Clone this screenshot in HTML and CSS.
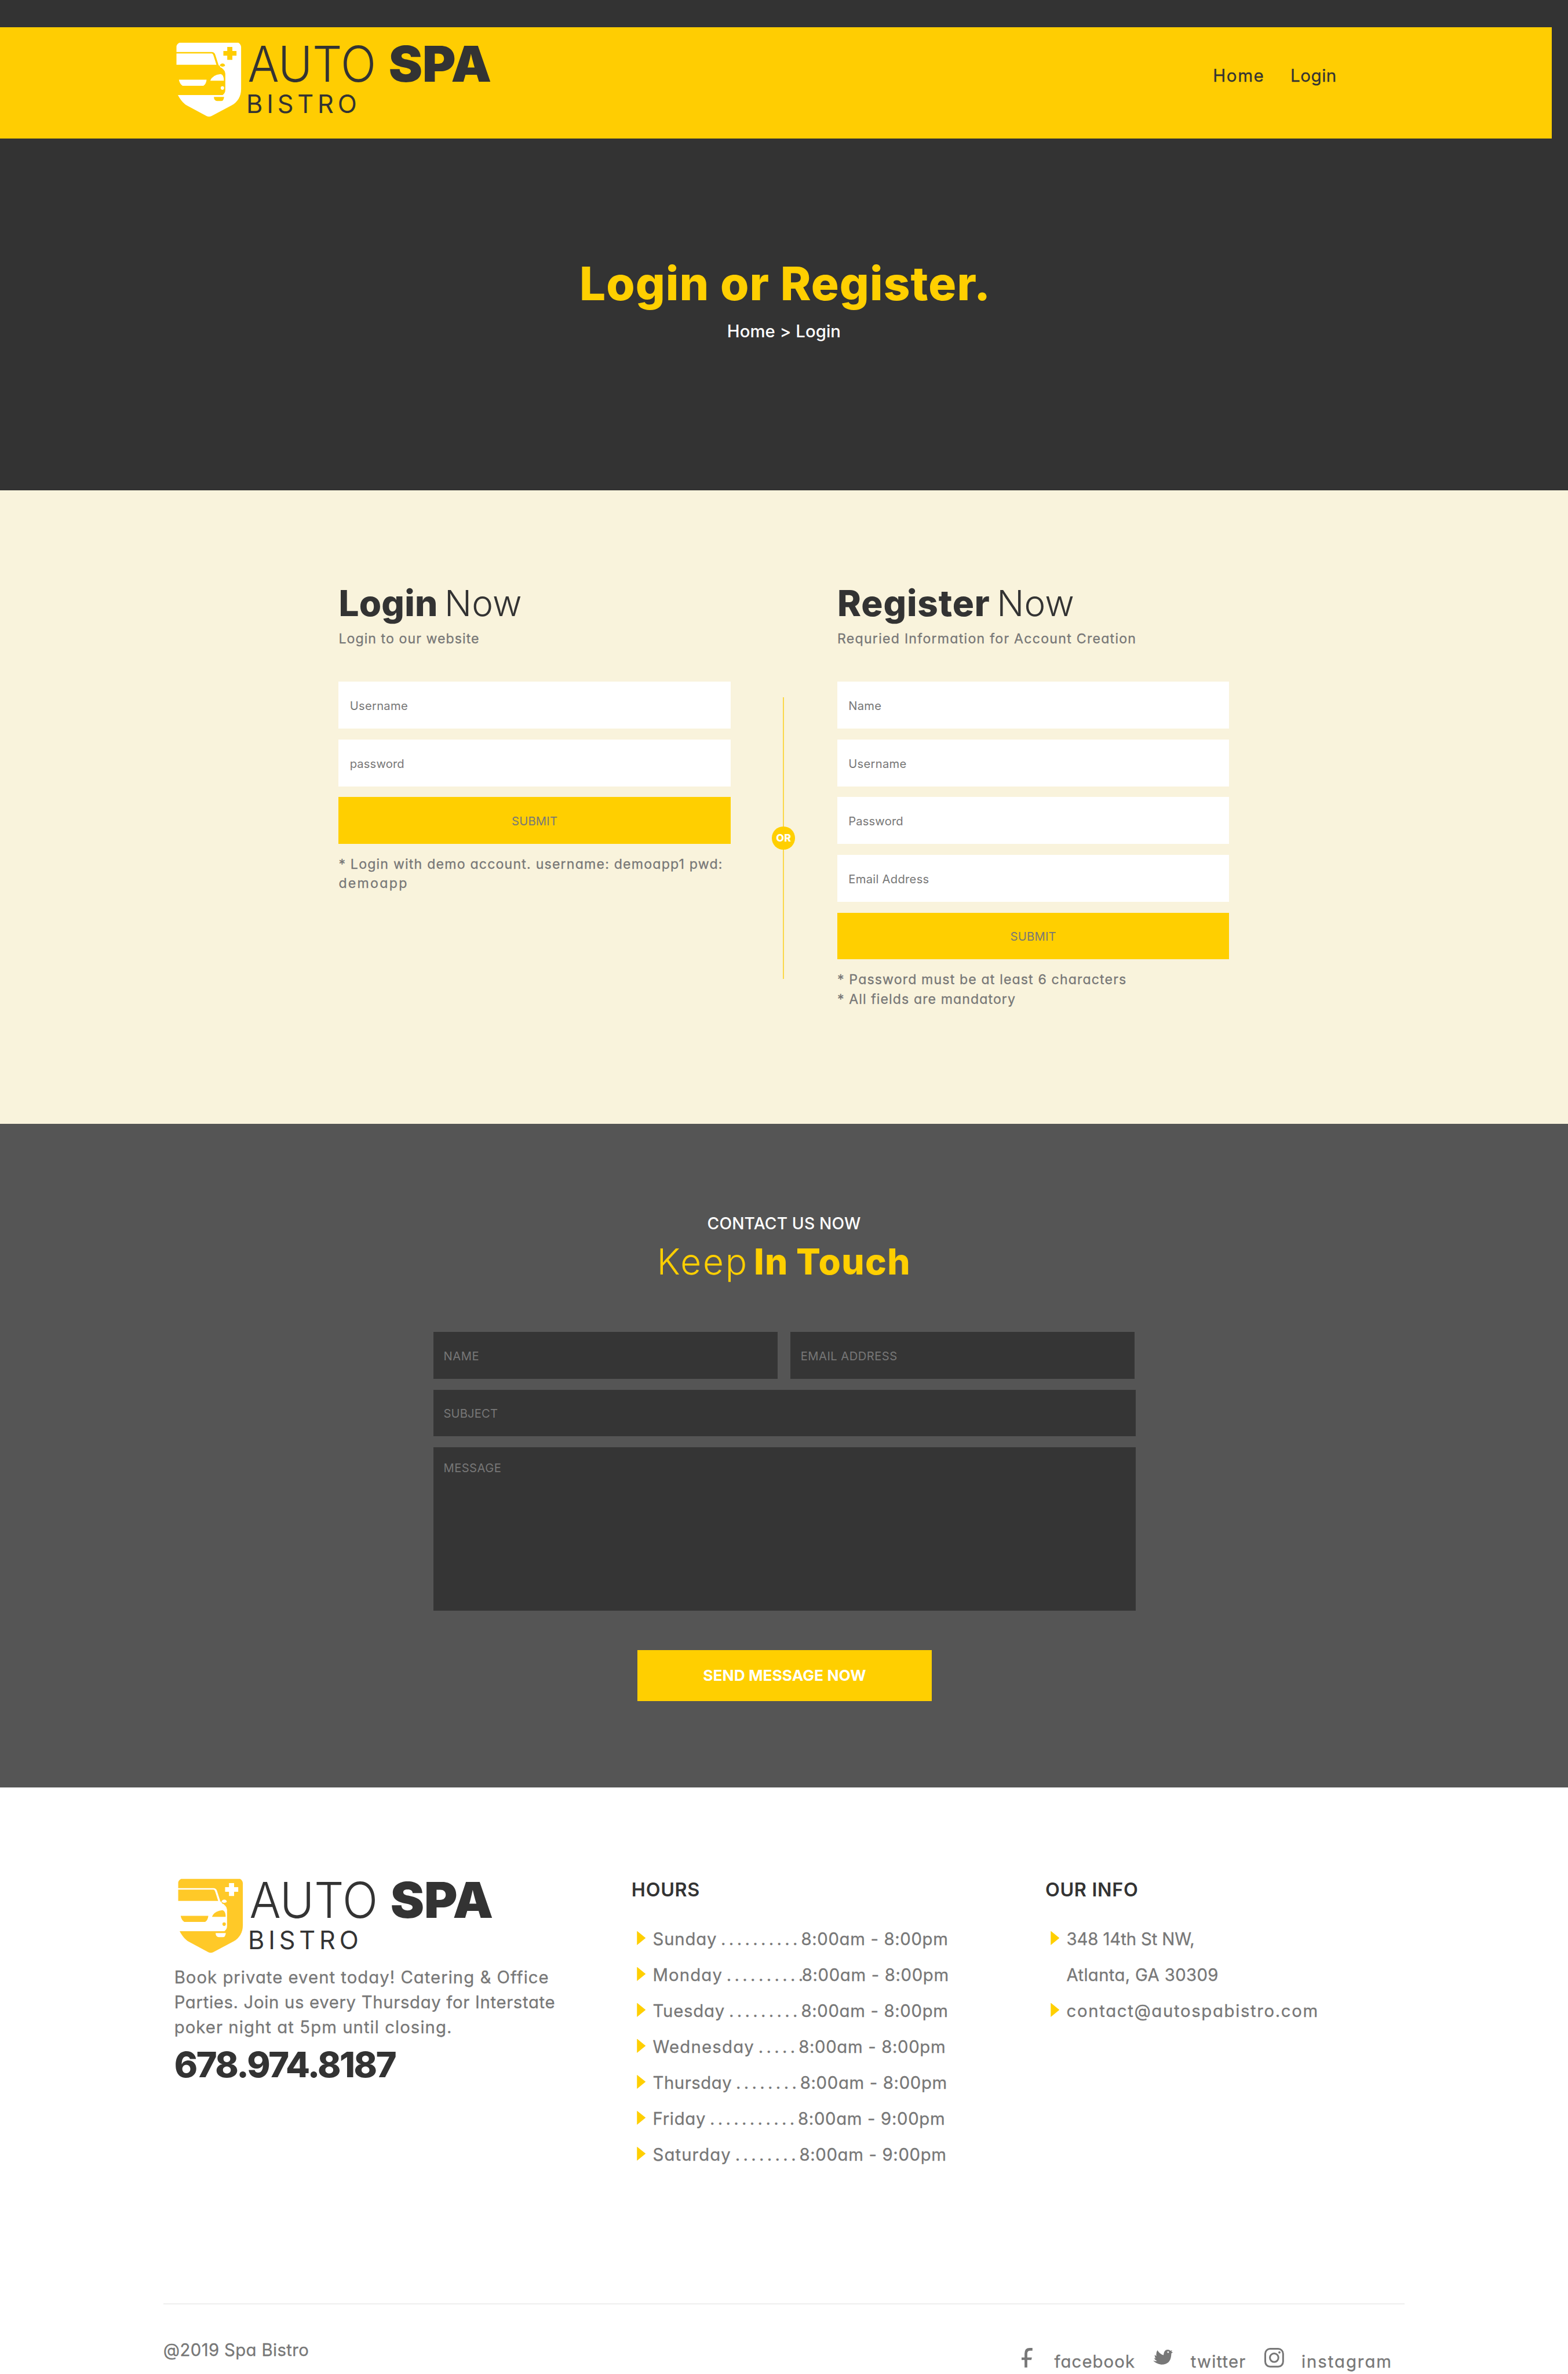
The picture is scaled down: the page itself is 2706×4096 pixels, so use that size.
FILE: index.html
```html
<!DOCTYPE html>
<html lang="en">
<head>
<meta charset="utf-8">
<title>Auto Spa Bistro - Login</title>
<link rel="stylesheet" href="styles.css">
</head>
<body>
<svg class="defs" aria-hidden="true">
  <symbol id="emblem" viewBox="0 0 590 150">
    <g transform="translate(-40 -70) scale(.44643 .33333)">
      <path class="shield" d="M98 255Q99 243 110 235H353Q363 244 364 258V490C364 530 350 560 325 580L242 639Q232 645 222 639L140 580C125 567 112 545 104 523L98 500Z"/>
      <path class="gap-line" d="M96 290H243Q251 290 254 303L268 362"/>
      <path class="gap" d="M92 356H268L275 362Q285 375 292 383Q299 392 299 405V495Q299 512 288 523H92ZM276 360Q280 348 289 349Q298 352 298 361Q294 369 283 366ZM252 533H294Q292 556 282 556H264Q252 552 252 533ZM307 258H328V280H345V306H328V329H307V306H291V280H307Z"/>
      <path class="shield" d="M237 444Q245 412 280 407Q294 412 293 444ZM108 438H222Q220 462 209 472H123Q111 460 108 438ZM281 374L276 364L284 368Z"/>
      <ellipse class="shield" cx="287" cy="484" rx="7" ry="10"/>
    </g>
  </symbol>
</svg>

<header class="header">
  <svg class="logo" viewBox="0 0 590 150">
    <use href="#emblem"/>
    <text class="logo-thin" x="134.5" y="80.3" textLength="236" lengthAdjust="spacingAndGlyphs">AUTO</text>
    <text class="logo-heavy" x="393.5" y="80.3" textLength="189" lengthAdjust="spacingAndGlyphs">SPA</text>
    <text class="logo-sub" x="132" y="137" textLength="203">BISTRO</text>
  </svg>
  <nav class="nav"><a class="ls-home">Home</a><a class="ls-login">Login</a></nav>
</header>

<section class="hero">
  <h1>Login or Register.</h1>
  <p>Home &gt; Login</p>
</section>

<section class="auth">
  <div class="auth-col">
    <h2><b class="ls-t1">Login</b> <span class="ls-t2">Now</span></h2>
    <p class="sub ls-s1">Login to our website</p>
    <form>
      <input class="ls-in" placeholder="Username">
      <input class="ls-in2" placeholder="password">
      <button type="button">SUBMIT</button>
    </form>
    <p class="note"><span class="ls-n1">* Login with demo account. username: demoapp1 pwd:</span><br><span class="ls-n2">demoapp</span></p>
  </div>
  <div class="divider"><span class="or">OR</span></div>
  <div class="auth-col">
    <h2><b class="ls-t3">Register</b> <span class="ls-t2">Now</span></h2>
    <p class="sub ls-s2">Requried Information for Account Creation</p>
    <form>
      <input class="ls-in" placeholder="Name">
      <input class="ls-in" placeholder="Username">
      <input class="ls-in2" placeholder="Password">
      <input class="ls-in" placeholder="Email Address">
      <button type="button">SUBMIT</button>
    </form>
    <p class="note"><span class="ls-n3">* Password must be at least 6 characters</span><br><span class="ls-n4">* All fields are mandatory</span></p>
  </div>
</section>

<section class="contact">
  <p class="kicker">CONTACT US NOW</p>
  <h2><span class="ls-k1">Keep</span> <b class="ls-k2">In Touch</b></h2>
  <form>
    <div class="pair"><input class="ls-c1" placeholder="NAME"><input class="ls-c2" placeholder="EMAIL ADDRESS"></div>
    <input class="ls-c3" placeholder="SUBJECT">
    <textarea class="ls-c2" placeholder="MESSAGE"></textarea>
    <button type="button">SEND MESSAGE NOW</button>
  </form>
</section>

<footer class="footer">
  <div class="cols">
    <div class="about">
      <svg class="logo" viewBox="0 0 590 150">
        <use href="#emblem"/>
        <text class="logo-thin" x="134.5" y="80.3" textLength="236" lengthAdjust="spacingAndGlyphs">AUTO</text>
        <text class="logo-heavy" x="393.5" y="80.3" textLength="189" lengthAdjust="spacingAndGlyphs">SPA</text>
        <text class="logo-sub" x="132" y="137" textLength="203">BISTRO</text>
      </svg>
      <p><span class="ls-a1">Book private event today! Catering &amp; Office</span><br><span class="ls-a2">Parties. Join us every Thursday for Interstate</span><br><span class="ls-a3">poker night at 5pm until closing.</span></p>
      <strong>678.974.8187</strong>
    </div>
    <div class="hours">
      <h3>HOURS</h3>
      <ul>
        <li><span class="d-sun">Sunday</span><i>. . . . . . . . . .</i><span>8:00am - 8:00pm</span></li>
        <li class="tight"><span class="d-mon">Monday</span><i>. . . . . . . . . .</i><span>8:00am - 8:00pm</span></li>
        <li><span class="d-tue">Tuesday</span><i>. . . . . . . . .</i><span>8:00am - 8:00pm</span></li>
        <li><span class="d-wed">Wednesday</span><i>. . . . .</i><span>8:00am - 8:00pm</span></li>
        <li><span class="d-thu">Thursday</span><i>. . . . . . . .</i><span>8:00am - 8:00pm</span></li>
        <li><span class="d-fri">Friday</span><i>. . . . . . . . . . .</i><span>8:00am - 9:00pm</span></li>
        <li><span class="d-sat">Saturday</span><i>. . . . . . . .</i><span>8:00am - 9:00pm</span></li>
      </ul>
    </div>
    <div class="info">
      <h3>OUR INFO</h3>
      <ul>
        <li><span class="i-street">348 14th St NW,</span></li>
        <li class="plain"><span class="i-city">Atlanta, GA 30309</span></li>
        <li><span class="i-mail">contact@autospabistro.com</span></li>
      </ul>
    </div>
  </div>
  <div class="bottom">
    <p class="copy">@2019 Spa Bistro</p>
    <div class="social">
      <svg class="ic-f" viewBox="0 0 20 36"><path d="M20 0V5H16Q10.500 5 10.500 10V17.500H19L18 22H10.500V36H5.500V22H0V17.500H5.500V10Q5.500 0 15 0Z"/></svg><a class="s-f">facebook</a>
      <svg class="ic-t" viewBox="0 0 36.3 27.4"><path fill-rule="evenodd" d="M8 1Q12 8 19 10Q20 0 27 0Q30 0 32 2L35 1L33.500 4L36.300 4.500L33.500 7C33 18 30 27.400 15 27.400Q5 26 0 20Q4 22 7 20.500Q3 19 2 15.500L5 16Q2.500 13 3 9.500L6 12Q5 5 8 1ZM27.500 3A1.500 1.500 0 1 0 27.600 3Z"/></svg><a class="s-t">twitter</a>
      <svg class="ic-i" viewBox="0 0 36 36"><rect x="1.600" y="1.600" width="32.800" height="32.800" rx="9"/><circle cx="18" cy="18" r="7.800"/><circle class="dot" cx="27.700" cy="8.300" r="2.100"/></svg><a class="s-i">instagram</a>
    </div>
  </div>
</footer>
</body>
</html>
```
FILE: styles.css
```css
/* 1rem is ten design pixels */
html { font-size: 9.3955px; }
* { box-sizing: border-box; margin: 0; padding: 0; }
body {
  width: 288rem; height: 4096px; overflow: hidden;
  padding-top: 5rem;
  background: linear-gradient(#333 5.2rem, #fff 5.2rem); color: #777;
  font: 400 3.12rem/4rem Inter, "Open Sans", sans-serif;
  font-feature-settings: "cv11";
}
.defs { position: absolute; width: 0; height: 0; }
ul { list-style: none; }
input, textarea, button { font: 400 2.15rem/3rem Inter, sans-serif; border: 0; border-radius: 0; display: block; resize: none; outline: 0; color: #777; font-feature-settings: normal; }
::placeholder { color: #777; opacity: 1; }
h1, h2, h3 { white-space: nowrap; }
.nav, .sub, .note, .about p, li, .copy, .social a { -webkit-text-stroke: .3px currentColor; }

.logo { display: block; width: 59rem; height: 15rem; overflow: visible; }
.shield { fill: var(--shield); }
.gap { fill: var(--gap); }
.gap-line { fill: none; stroke: var(--gap); stroke-width: 8; }
.logo-thin { font-size: 91px; font-weight: 300; fill: #333; }
.logo-heavy { font-size: 91px; font-weight: 900; fill: #333; }
.logo-sub { font-size: 46px; font-weight: 400; fill: #333; }

.header { --shield: #fff; --gap: #ffcd02; display: flex; align-items: flex-start; width: 285rem; height: 20.4rem; padding: 2rem 0 0 32rem; background: #ffcd02; box-shadow: 3rem 0 #333; }
.nav { display: grid; grid-template-columns: 14.23rem auto; margin: 4.95rem 0 0 131.8rem; color: #333; font-size: 3.15rem; }

.hero { height: 64.6rem; padding-top: 21.8rem; background: #333; text-align: center; color: #fff; font-weight: 500; letter-spacing: .0025em; }
.hero h1 { font-size: 8.5rem; line-height: 10rem; font-weight: 800; color: #ffcf00; margin-bottom: 1.71rem; padding-left: .46rem; letter-spacing: .0137em; }

.auth { display: grid; grid-template-columns: 72rem 19.6rem 72rem; height: 116.4rem; padding: 16.72rem 0 0 62.2rem; background: #f9f3dc; align-items: start; }
h2 { font-size: 6.6rem; line-height: 8rem; font-weight: 300; color: #333; word-spacing: -.65rem; }
h2 b { font-weight: 800; }
.sub, .note { font-size: 2.46rem; line-height: 3.6rem; white-space: nowrap; }
.sub { margin: .83rem 0 6.05rem; }
.note { margin-top: 1.95rem; }
.auth form { display: grid; gap: 2rem; }
.auth input { width: 100%; height: 8.6rem; padding: .2rem 2.05rem 0; background: #fff; }
.auth button { height: 8.6rem; padding-top: .3rem; background: #ffcf00; letter-spacing: .0113em; }
.divider { position: relative; justify-self: center; width: 2px; height: 51.8rem; margin: 21.28rem .15rem 0 0; background: #fbd84a; }
.or { position: absolute; left: -2rem; top: 23.8rem; width: 4.2rem; height: 4.2rem; border-radius: 50%; background: #ffcf00; color: #fff; font-size: 1.9rem; line-height: 4.2rem; font-weight: 800; text-align: center; }

.contact { height: 121.9rem; padding-top: 16.39rem; background: #555; text-align: center; }
.kicker { color: #fff; font-size: 3rem; font-weight: 500; letter-spacing: .0057em; }
.contact h2 { color: #ffcf00; margin: .9rem 0 8.91rem; word-spacing: -.9rem; }
.contact h2 b { word-spacing: -.2rem; }
.contact form { display: grid; gap: 2rem; width: 129rem; margin-left: 79.6rem; }
.pair { display: grid; grid-template-columns: 63.2rem 63.2rem; gap: 2.4rem; }
.contact input, .contact textarea { width: 100%; height: 8.6rem; padding: .2rem 1.87rem 0; background: #353535; }
.contact textarea { height: 30rem; padding-top: 2.3rem; }
.contact button { justify-self: center; width: 54rem; height: 9.4rem; margin-top: 5.2rem; background: #ffcf00; color: #fff; font-size: 2.8rem; font-weight: 700; letter-spacing: .0022em; }

.footer { --shield: #ffc928; --gap: #fff; padding-top: 15.9rem; }
.cols { display: grid; grid-template-columns: 84rem 76rem auto; height: 78.8rem; padding-left: 32rem; align-items: start; }
.about .logo { margin-left: .4rem; }
.about p { margin-top: 1.61rem; line-height: 4.6rem; white-space: nowrap; }
.about strong { display: block; margin-top: .63rem; font-size: 6.5rem; line-height: 8rem; font-weight: 800; color: #333; letter-spacing: -.0395em; }
h3 { margin: .39rem 0 3.22rem; font-size: 3.44rem; line-height: 5rem; font-weight: 600; color: #333; letter-spacing: .021em; }
li { display: flex; line-height: 6.6rem; white-space: pre; letter-spacing: .0225em; }
li::before { content: ""; width: 1.6rem; height: 2.6rem; margin: 1.79rem 1.3rem 0 1rem; background: #ffcf00; clip-path: polygon(0 0, 100% 50%, 0 100%); }
li.plain::before { visibility: hidden; }
li i { font-style: normal; letter-spacing: -.0495em; margin: 0 .78rem 0 .72rem; }
li.tight i { margin-right: -.12rem; }
.bottom { display: flex; justify-content: space-between; width: 228rem; margin-left: 30rem; border-top: 2px solid #eee; padding-top: 6.31rem; }
.social { display: grid; grid-template-columns: 6.05rem 18.1rem 6.95rem 13.5rem 6.85rem 18.95rem; margin-top: 2.17rem; white-space: nowrap; }
.social svg { fill: #777; overflow: visible; margin-top: -.48rem; }
.ic-f { width: 2rem; height: 3.6rem; }
.social .ic-t { width: 3.63rem; height: 2.74rem; margin-top: -.21rem; }
.social .ic-i { width: 3.6rem; height: 3.6rem; fill: none; stroke: #777; stroke-width: 3.2; }
.ic-i .dot { fill: #777; stroke: none; }

/* per-string tracking */
.ls-home { letter-spacing: .053em; }
.ls-login { letter-spacing: .018em; }
.ls-t1 { letter-spacing: .0036em; }
.ls-t2 { letter-spacing: .0033em; }
.ls-t3 { letter-spacing: .0143em; }
.ls-s1 { letter-spacing: .046em; }
.ls-s2 { letter-spacing: .0543em; }
.ls-in { letter-spacing: .014em; }
.ls-in2 { letter-spacing: .007em; }
.ls-n1 { letter-spacing: .0520em; }
.ls-n2 { letter-spacing: .0990em; }
.ls-n3 { letter-spacing: .0493em; }
.ls-n4 { letter-spacing: .047em; }
.ls-k1 { letter-spacing: .0457em; }
.ls-k2 { letter-spacing: .0225em; }
.ls-c1 { letter-spacing: .0299em; }
.ls-c2 { letter-spacing: .0225em; }
.ls-c3 { letter-spacing: .0079em; }
.ls-a1 { letter-spacing: .0350em; }
.ls-a2 { letter-spacing: .0230em; }
.ls-a3 { letter-spacing: .0365em; }
.d-sun { letter-spacing: .0289em; }
.d-mon { letter-spacing: .0389em; }
.d-tue { letter-spacing: .0277em; }
.d-wed { letter-spacing: .0412em; }
.d-thu { letter-spacing: .0185em; }
.d-fri { letter-spacing: .0246em; }
.d-sat { letter-spacing: .038em; }
.i-street { letter-spacing: -.0034em; }
.i-city { letter-spacing: .0116em; }
.i-mail { letter-spacing: .057em; }
.copy { letter-spacing: .0128em; }
.s-f { letter-spacing: .0372em; }
.s-t { letter-spacing: .041em; }
.s-i { letter-spacing: .0671em; }
```
